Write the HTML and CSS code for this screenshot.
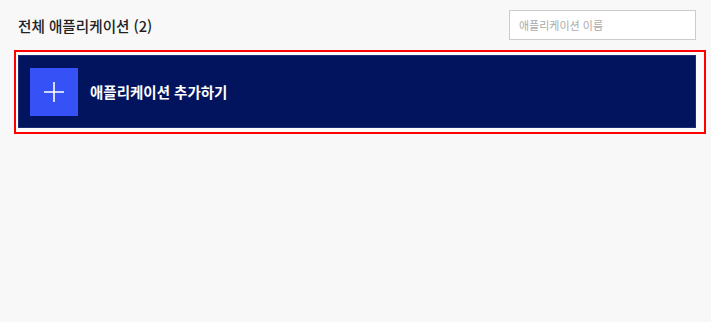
FILE: index.html
```html
<!DOCTYPE html>
<html lang="ko">
<head>
<meta charset="utf-8">
<link rel="stylesheet" href="styles.css">
</head>
<body>
<div class="page">
  <div class="header">
    <h1 class="title">전체 애플리케이션 (2)</h1>
    <input class="search" type="text" placeholder="애플리케이션 이름">
  </div>
  <div class="highlight">
    <div class="add-card">
      <span class="plus-box">
        <svg width="20" height="20" viewBox="0 0 20 20"><path d="M10 0V20M0 10H20" stroke="#fff" stroke-width="1.6" fill="none"/></svg>
      </span>
      <span class="add-label">애플리케이션 추가하기</span>
    </div>
  </div>
</div>
</body>
</html>
```
FILE: styles.css
```css
html, body {
  margin: 0;
  padding: 0;
  background: #f8f8f8;
  font-family: "Noto Sans CJK KR", "Noto Sans", sans-serif;
}
.page {
  padding: 10px 5px 0 14px;
  height: 312px;
}
.header {
  display: flex;
  align-items: center;
  justify-content: space-between;
  margin: 0 10px 10px 4px;
  height: 30px;
}
.title {
  margin: 0;
  padding-top: 2px;
  font-size: 14.6px;
  font-weight: 500;
  color: #222;
  line-height: 28px;
}
.search {
  box-sizing: border-box;
  width: 187px;
  height: 30px;
  border: 1px solid #cccccc;
  background: #fff;
  padding: 0 9px;
  font-family: "Noto Sans CJK KR", sans-serif;
  font-size: 11px;
  color: #333;
  outline: none;
}
.search::placeholder {
  color: #aaaaaa;
}
.highlight {
  border: 2px solid #ff0000;
  padding: 3px 8px 4px 2px;
  background: #fbfbfb;
}
.add-card {
  box-sizing: border-box;
  height: 73px;
  background: #03145f;
  border: 1px solid #1d2c70;
  display: flex;
  align-items: center;
  padding-left: 11px;
  gap: 12px;
}
.plus-box {
  width: 48px;
  height: 48px;
  background: #3652f6;
  display: flex;
  align-items: center;
  justify-content: center;
}
.plus-box svg {
  display: block;
}
.add-label {
  color: #fff;
  font-size: 14.5px;
  font-weight: 700;
}
```
